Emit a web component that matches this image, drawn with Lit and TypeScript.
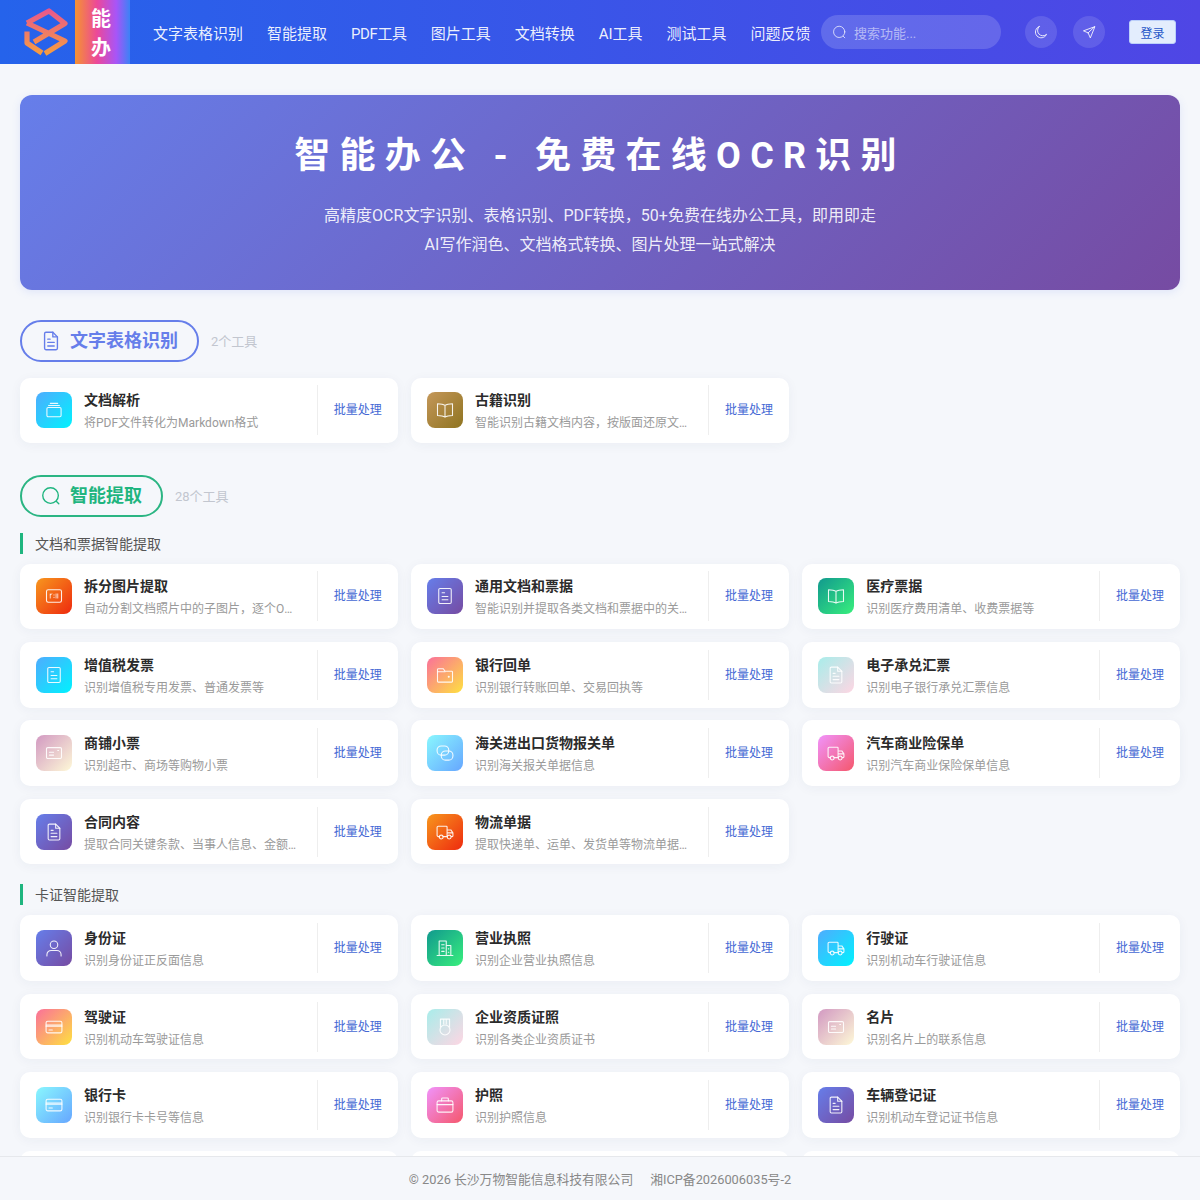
import { LitElement, html, css, svg } from "lit";
import { customElement } from "lit/decorators.js";

const G: Record<string, string> = {
  blue: "linear-gradient(135deg,#4facfe,#00f2fe)",
  gold: "linear-gradient(135deg,#c4975a,#8f7420)",
  orange: "linear-gradient(135deg,#f7971e,#ee2a0e)",
  purple: "linear-gradient(135deg,#667eea,#764ba2)",
  green: "linear-gradient(135deg,#11998e,#38ef7d)",
  sunset: "linear-gradient(135deg,#fa709a,#fee140)",
  teal: "linear-gradient(135deg,#a8edea,#fed6e3)",
  dusty: "linear-gradient(135deg,#d299c2,#fef9d7)",
  sky: "linear-gradient(135deg,#89f7fe,#66a6ff)",
  pink: "linear-gradient(135deg,#f093fb,#f5576c)",
};

const I: Record<string, any> = {
  box: svg`<rect x="3.5" y="9" width="17" height="11" rx="1.5"/><path d="M5.5 6.5h13M7.5 4h9"/>`,
  book: svg`<path d="M12 6.5C10 5 7 4.5 3 4.5v14c4 0 7 .5 9 2 2-1.500 5-2 9-2v-14c-4 0-7 .5-9 2zM12 6.500v14"/>`,
  doc: svg`<rect x="4.500" y="3" width="15" height="18" rx="1.500"/><path d="M8.500 8h3M8.500 12.500h7M8.500 16.500h7"/>`,
  split: svg`<rect x="3" y="4.500" width="18" height="15" rx="2"/><path d="M7.500 9.500v5M9.500 9.500l-2 1M16.500 9.500v5M14.500 9.500v5M12 10.500v.5M12 13.500v.5" stroke-width="1"/>`,
  wallet: svg`<path d="M3 19.500V5.500a1 1 0 0 1 1-1h6l2 3h8a1 1 0 0 1 1 1v11a1 1 0 0 1-1 1H4a1 1 0 0 1-1-1z"/><path d="M3 8h9"/><circle cx="16.500" cy="14" r=".6"/>`,
  file: svg`<path d="M14 2.500H6.500a1.500 1.500 0 0 0-1.500 1.500v16a1.500 1.500 0 0 0 1.500 1.500h11a1.500 1.500 0 0 0 1.500-1.500V7.500z"/><path d="M14 2.500v5h5M8.500 10h2.500M8.500 13.500h7M8.500 17.500h7"/>`,
  idcard: svg`<rect x="3" y="5.500" width="18" height="13" rx="1.500"/><path d="M6.500 11h5M6.500 14.500h5M16.500 9h1"/>`,
  chat: svg`<rect x="2.500" y="3.500" width="14" height="11" rx="5"/><rect x="7.500" y="9.500" width="14" height="11" rx="5"/>`,
  truck: svg`<path d="M5.500 17.500H4a1.500 1.500 0 0 1-1.500-1.500V6.500A1.500 1.500 0 0 1 4 5h9.500a1 1 0 0 1 1 1v11.500h-5M14.500 9.500H19l2.500 3.500v3.500a1 1 0 0 1-1 1h-1M14.500 13h7"/><circle cx="7.500" cy="18" r="2.300"/><circle cx="17" cy="18" r="2.300"/>`,
  user: svg`<circle cx="12" cy="8" r="4.500"/><path d="M3.500 21.500v-1.500a5 5 0 0 1 5-5h7a5 5 0 0 1 5 5v1.500"/>`,
  building: svg`<path d="M2.500 21h19M5 21V3.500h8.500V21M13.500 9H19v12M8 8h3M8 12h3M8 16h3M16 13h.5M16 17h.5"/>`,
  card: svg`<rect x="2.500" y="5" width="19" height="14" rx="2"/><path d="M2.500 9.500h19M2.500 11h19M6 15.500h4"/>`,
  medal: svg`<path d="M6.500 2.500h11v9M6.500 2.500v9M10.500 2.500v6M13.500 2.500v6"/><circle cx="12" cy="15.500" r="6"/>`,
  case: svg`<rect x="2.500" y="7" width="19" height="13.500" rx="2"/><path d="M8 7V4.500a1 1 0 0 1 1-1h6a1 1 0 0 1 1 1V7M2.500 11.500h19"/>`,
};

type T = [string, string, string, string];
const row1: T[] = [
  ["文档解析", "将PDF文件转化为Markdown格式", "blue", "box"],
  ["古籍识别", "智能识别古籍文档内容，按版面还原文档结构并输出文本", "gold", "book"],
];
const row2: T[] = [
  ["拆分图片提取", "自动分割文档照片中的子图片，逐个OCR识别并提取内容", "orange", "split"],
  ["通用文档和票据", "智能识别并提取各类文档和票据中的关键字段信息", "purple", "doc"],
  ["医疗票据", "识别医疗费用清单、收费票据等", "green", "book"],
  ["增值税发票", "识别增值税专用发票、普通发票等", "blue", "doc"],
  ["银行回单", "识别银行转账回单、交易回执等", "sunset", "wallet"],
  ["电子承兑汇票", "识别电子银行承兑汇票信息", "teal", "file"],
  ["商铺小票", "识别超市、商场等购物小票", "dusty", "idcard"],
  ["海关进出口货物报关单", "识别海关报关单据信息", "sky", "chat"],
  ["汽车商业险保单", "识别汽车商业保险保单信息", "pink", "truck"],
  ["合同内容", "提取合同关键条款、当事人信息、金额等重要内容", "purple", "file"],
  ["物流单据", "提取快递单、运单、发货单等物流单据中的关键信息", "orange", "truck"],
];
const row3: T[] = [
  ["身份证", "识别身份证正反面信息", "purple", "user"],
  ["营业执照", "识别企业营业执照信息", "green", "building"],
  ["行驶证", "识别机动车行驶证信息", "blue", "truck"],
  ["驾驶证", "识别机动车驾驶证信息", "sunset", "card"],
  ["企业资质证照", "识别各类企业资质证书", "teal", "medal"],
  ["名片", "识别名片上的联系信息", "dusty", "idcard"],
  ["银行卡", "识别银行卡卡号等信息", "sky", "card"],
  ["护照", "识别护照信息", "pink", "case"],
  ["车辆登记证", "识别机动车登记证书信息", "purple", "file"],
];

const nav = ["文字表格识别", "智能提取", "PDF工具", "图片工具", "文档转换", "AI工具", "测试工具", "问题反馈"];

@customElement("app-root")
export class AppRoot extends LitElement {
  static styles = css`
    :host {
      display: block;
      position: relative;
      height: 100vh;
      overflow: hidden;
      background: #f5f7fb;
      font-family: Roboto, "Noto Sans CJK SC", sans-serif;
      color: #333;
    }
    svg { display: block; }
    .header {
      height: 64px;
      display: flex;
      align-items: center;
      padding-left: 24px;
      background: linear-gradient(90deg, #2563eb, #4f46e5);
      color: #fff;
    }
    .logo { width: 44px; height: 48px; flex: none; margin-right: 7px; }
    .brand {
      width: 55px;
      height: 64px;
      flex: none;
      box-sizing: border-box;
      display: flex;
      flex-direction: column;
      align-items: center;
      justify-content: center;
      padding: 4px 3px 0 0;
      background: linear-gradient(90deg, #f59331 0%, #ec4899 40%, #a855f7 75%, #3b82f6 100%);
      font-size: 20px;
      line-height: 29px;
      font-weight: 700;
      margin-right: 23px;
    }
    .nav { display: flex; gap: 24px; font-size: 15px; color: rgba(255,255,255,.92); white-space: nowrap; width: 668px; }
    .nav span:nth-child(3) { letter-spacing: -.4px; }
    .search {
      width: 180px;
      height: 34px;
      border-radius: 17px;
      background: rgba(255,255,255,.16);
      display: flex;
      align-items: center;
      gap: 7px;
      padding-left: 11px;
      box-sizing: border-box;
      font-size: 13px;
      color: rgba(255,255,255,.55);
      flex: none;
    }
    .search svg { stroke: rgba(255,255,255,.75); }
    .round {
      width: 32px;
      height: 32px;
      border-radius: 50%;
      background: rgba(255,255,255,.12);
      display: flex;
      align-items: center;
      justify-content: center;
      flex: none;
    }
    .round svg { stroke: rgba(255,255,255,.85); }
    .r1 { margin-left: 24px; }
    .r2 { margin-left: 16px; }
    .login {
      margin-left: 24px;
      width: 47px;
      height: 24px;
      box-sizing: border-box;
      border-radius: 3px;
      background: #e3edfd;
      border: 1px solid #bcd0fa;
      color: #1e56c8;
      font-size: 12px;
      display: flex;
      align-items: center;
      justify-content: center;
      flex: none;
    }
    .main { padding: 30.500px 20px 0; }
    .hero {
      height: 195px;
      box-sizing: border-box;
      border-radius: 12px;
      background: linear-gradient(135deg, #667eea, #764ba2);
      color: #fff;
      text-align: center;
      padding-top: 34px;
      box-shadow: 0 2px 8px rgba(102,126,234,.15);
    }
    .hero h1 {
      margin: 0 0 18px;
      font-size: 36px;
      line-height: 54px;
      font-weight: 700;
      letter-spacing: 9.250px;
    }
    .hero p { margin: 0; font-size: 16px; line-height: 29px; color: rgba(255,255,255,.9); }
    .sec { display: flex; align-items: center; gap: 12px; }
    .sec1 { margin-top: 30px; }
    .sec2 { margin-top: 31.500px; }
    .pill {
      height: 42px;
      box-sizing: border-box;
      border-radius: 21px;
      border: 2px solid;
      display: flex;
      align-items: center;
      gap: 8px;
      padding: 0 19px 0 18px;
      font-size: 18px;
      font-weight: 700;
    }
    .pill span { margin-bottom: 4px; }
    .pill svg { fill: none; stroke: currentColor; stroke-width: 1.500; stroke-linecap: round; stroke-linejoin: round; }
    .pill.p { color: #667eea; border-color: #667eea; }
    .pill.g { color: #1fb57f; border-color: #2bb583; }
    .count { font-size: 13px; color: #c2c6cf; }
    .sub {
      height: 21px;
      border-left: 3px solid #1fb57f;
      padding-left: 12px;
      font-size: 14px;
      line-height: 23px;
      color: #555;
    }
    .grid {
      display: grid;
      grid-template-columns: repeat(3, minmax(0, 1fr));
      column-gap: 13.300px;
      row-gap: 12.800px;
    }
    .mt10 { margin-top: 10px; }
    .mt11 { margin-top: 10.400px; }
    .s1 { margin-top: 16px; }
    .s2 { margin-top: 19.600px; }
    .card {
      height: 65.600px;
      box-sizing: border-box;
      background: #fff;
      border-radius: 10px;
      box-shadow: 0 2px 12px rgba(40,50,90,.05);
      display: flex;
      align-items: center;
      padding-left: 16px;
    }
    .ic {
      width: 36px;
      height: 36px;
      border-radius: 8px;
      display: flex;
      align-items: center;
      justify-content: center;
      flex: none;
      margin-right: 12px;
    }
    .ic svg { fill: none; stroke: rgba(255,255,255,.9); stroke-width: 1.300; stroke-linecap: round; stroke-linejoin: round; }
    .txt { flex: 1; min-width: 0; padding: 2px 17.500px 0 0; }
    .t { font-size: 14px; line-height: 21px; font-weight: 600; color: #2b2b2b; white-space: nowrap; }
    .d { font-size: 12px; line-height: 18px; margin-top: 3px; color: #9a9a9a; white-space: nowrap; overflow: hidden; text-overflow: ellipsis; }
    .b {
      flex: none;
      height: 50px;
      width: 81px;
      box-sizing: border-box;
      border-left: 1px solid #eeeeee;
      padding: 0 0 3px 16px;
      display: flex;
      align-items: center;
      font-size: 12px;
      color: #4468d4;
      white-space: nowrap;
    }
    .blank { height: 65.600px; background: #fff; border-radius: 10px; }
    .footer {
      position: absolute;
      left: 0;
      right: 0;
      bottom: 0;
      height: 44px;
      box-sizing: border-box;
      border-top: 1px solid #e6e8ec;
      background: #f5f7fb;
      display: flex;
      align-items: center;
      justify-content: center;
      gap: 17px;
      font-size: 12.800px;
      color: #888;
    }
  `;

  private cards(list: T[]) {
    return list.map(
      ([t, d, g, i]) => html`<div class="card">
        <div class="ic" style="background:${G[g]}">
          <svg width="20" height="20" viewBox="0 0 24 24">${I[i]}</svg>
        </div>
        <div class="txt"><div class="t">${t}</div><div class="d">${d}</div></div>
        <div class="b">批量处理</div>
      </div>`
    );
  }

  render() {
    return html`
      <div class="header">
        <svg class="logo" viewBox="0 0 44 48" fill="none" stroke-width="5.200" stroke-linejoin="round" stroke-linecap="butt">
          <defs>
            <linearGradient id="lg" gradientUnits="userSpaceOnUse" x1="0" y1="0" x2="0" y2="48">
              <stop offset="0" stop-color="#e8558f" />
              <stop offset="1" stop-color="#f7a03c" />
            </linearGradient>
          </defs>
          <path stroke="url(#lg)" d="M3 15 L25 3 L41 15.500 L10 34 M3 15 L41 33 L21 45.500 M3 23.500 V35 L18 45"/>
        </svg>
        <div class="brand"><span>能</span><span>办</span></div>
        <div class="nav">${nav.map((n) => html`<span>${n}</span>`)}</div>
        <div class="search">
          <svg width="15" height="15" viewBox="0 0 24 24" fill="none" stroke-width="1.500" stroke-linecap="round"><circle cx="11.500" cy="11" r="9"/><path d="M18 18l2.500 2.500"/></svg>
          <span>搜索功能...</span>
        </div>
        <div class="round r1">
          <svg width="14" height="14" viewBox="0 0 24 24" fill="none" stroke-width="1.700" stroke-linecap="round" stroke-linejoin="round"><path d="M9 2.500A10 10 0 1 0 21.500 16 9 9 0 0 1 9 2.500z"/></svg>
        </div>
        <div class="round r2">
          <svg width="14" height="14" viewBox="0 0 24 24" fill="none" stroke-width="1.700" stroke-linecap="round" stroke-linejoin="round"><path d="M21.500 3 2.500 10l8 3.500 3.500 8zM10.500 13.500 21.500 3"/></svg>
        </div>
        <div class="login">登录</div>
      </div>
      <div class="main">
        <div class="hero">
          <h1>智能办公 - 免费在线OCR识别</h1>
          <p>高精度OCR文字识别、表格识别、PDF转换，50+免费在线办公工具，即用即走</p>
          <p>AI写作润色、文档格式转换、图片处理一站式解决</p>
        </div>

        <div class="sec sec1">
          <div class="pill p">
            <svg width="22" height="22" viewBox="0 0 24 24"><path d="M14 2.500H6.500A1.500 1.500 0 0 0 5 4v16a1.500 1.500 0 0 0 1.500 1.500h11a1.500 1.500 0 0 0 1.500-1.500V7.500z"/><path d="M14 2.500v5h5M8.500 10h2.500M8.500 13.500h7M8.500 17.500h7"/></svg>
            <span>文字表格识别</span>
          </div>
          <span class="count">2个工具</span>
        </div>
        <div class="grid s1">${this.cards(row1)}</div>

        <div class="sec sec2">
          <div class="pill g">
            <svg width="22" height="22" viewBox="0 0 24 24"><circle cx="11.500" cy="11.500" r="8.500"/><path d="M18 18l2.500 2.500"/></svg>
            <span>智能提取</span>
          </div>
          <span class="count">28个工具</span>
        </div>
        <div class="sub s1">文档和票据智能提取</div>
        <div class="grid mt10">${this.cards(row2)}</div>
        <div class="sub s2">卡证智能提取</div>
        <div class="grid mt11">
          ${this.cards(row3)}
          <div class="blank"></div><div class="blank"></div><div class="blank"></div>
        </div>
      </div>
      <div class="footer">
        <span>© 2026 长沙万物智能信息科技有限公司</span>
        <span>湘ICP备2026006035号-2</span>
      </div>
    `;
  }
}
